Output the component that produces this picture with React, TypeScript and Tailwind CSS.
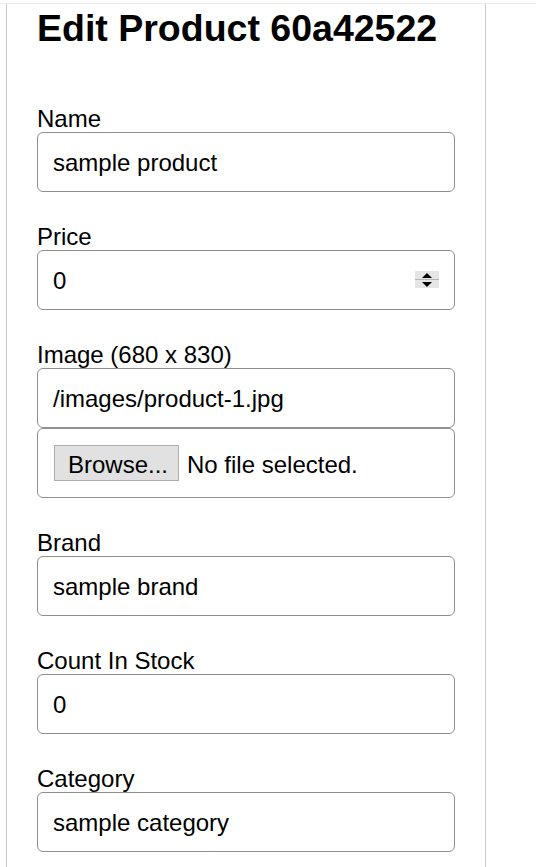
import React from "react";

function Field({ label, value, children }: { label: string; value?: string; children?: React.ReactNode }) {
  return (
    <div className="mb-[33px]">
      <label className="block h-[25px] leading-[23px] text-[24px]">{label}</label>
      {value !== undefined && (
        <div className="h-[60px] w-full rounded-[6px] border border-[#8f8f8f] px-[15px] pt-[2px] flex items-center text-[24px] leading-[28px] relative">
          <span>{value}</span>
          {children}
        </div>
      )}
    </div>
  );
}

function Spinner() {
  return (
    <div className="absolute right-[15px] top-[20px] w-[24px] h-[17px] bg-[#e5e5e5] flex flex-col">
      <div className="flex-1 flex items-center justify-center border-b border-[#b5b5b5]">
        <svg width="10" height="5" viewBox="0 0 10 5"><polygon points="0,5 10,5 5,0" fill="#000" /></svg>
      </div>
      <div className="flex-1 flex items-center justify-center">
        <svg width="10" height="5" viewBox="0 0 10 5"><polygon points="0,0 10,0 5,5" fill="#000" /></svg>
      </div>
    </div>
  );
}

export default function App() {
  return (
    <div className="min-h-[867px] bg-white text-black" style={{ fontFamily: '"Liberation Sans", Arial, sans-serif' }}>
      <div className="h-[4px] border-b border-[#ececec]" />
      <div className="ml-[6px] w-[480px] border-l border-r border-[#c8c8c8] px-[30px] min-h-[863px]">
        <h1 className="text-[37.5px] font-bold leading-[44px] pt-[2px] mb-[57px]">Edit Product 60a42522</h1>
        <Field label="Name" value="sample product" />
        <Field label="Price" value="0">
          <Spinner />
        </Field>
        <div className="mb-[33px]">
          <label className="block h-[25px] leading-[23px] text-[24px]">Image (680 x 830)</label>
          <div className="h-[60px] w-full rounded-[6px] border border-[#8f8f8f] px-[15px] pt-[2px] flex items-center text-[24px] leading-[28px]">
            /images/product-1.jpg
          </div>
          <div className="h-[70px] w-full rounded-[6px] border border-[#8f8f8f] px-[16px] flex items-center text-[24px] leading-[28px]">
            <span className="h-[36px] w-[125px] bg-[#e1e1e1] border border-[#adadad] flex items-center pl-[13px] pt-[3px]">Browse...</span>
            <span className="ml-[8px] pt-[3px]">No file selected.</span>
          </div>
        </div>
        <Field label="Brand" value="sample brand" />
        <Field label="Count In Stock" value="0" />
        <Field label="Category" value="sample category" />
      </div>
    </div>
  );
}
